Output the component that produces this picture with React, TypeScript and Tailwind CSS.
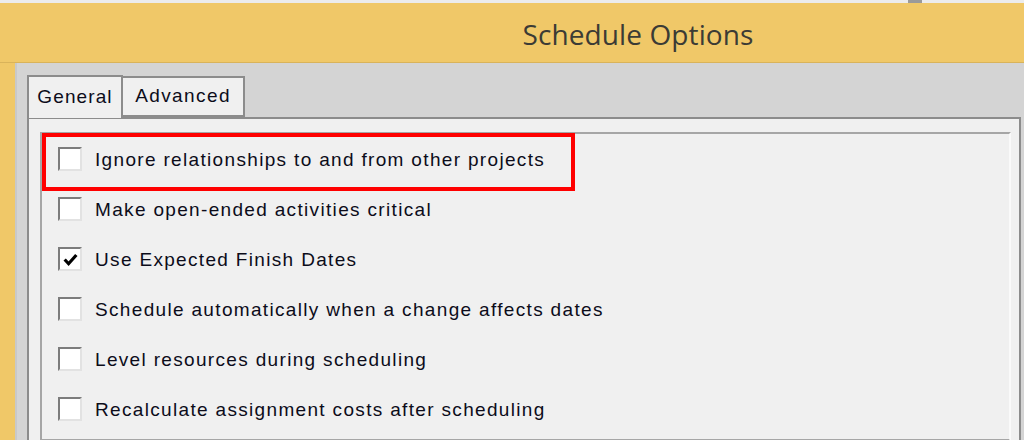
const options = [
  { label: 'Ignore relationships to and from other projects', checked: false },
  { label: 'Make open-ended activities critical', checked: false },
  { label: 'Use Expected Finish Dates', checked: true },
  { label: 'Schedule automatically when a change affects dates', checked: false },
  { label: 'Level resources during scheduling', checked: false },
  { label: 'Recalculate assignment costs after scheduling', checked: false },
];

function CheckBox({ checked }: { checked: boolean }) {
  return (
    <div className="w-[24px] h-[24px] shrink-0 bg-white border-[2px] border-t-[#7c7c7c] border-l-[#7c7c7c] border-r-[#e2e2e2] border-b-[#e2e2e2] flex items-center justify-center">
      {checked && (
        <svg viewBox="0 0 16 16" className="w-[17px] h-[17px]">
          <path d="M2.5 8 L6.2 12 L13.5 3.8" fill="none" stroke="#000" strokeWidth="3" />
        </svg>
      )}
    </div>
  );
}

export default function App() {
  return (
    <div className="w-[1024px] h-[440px] overflow-hidden bg-[#f0c868] flex flex-col font-['Liberation_Sans',Arial,sans-serif]">
      <div className="h-[3px] bg-[#ececec] relative shrink-0">
        <div className="absolute left-[908px] top-0 w-[14px] h-[3px] bg-[#9a9a9a]" />
      </div>
      <div className="h-[60px] shrink-0 flex items-center justify-center pl-[252px] pt-[3px] border-b border-[#d9b35a]">
        <span className="text-[28px] text-[#3b3b35] font-['Open_Sans','Noto_Sans',sans-serif] tracking-[0.1px]">Schedule Options</span>
      </div>
      <div className="flex-1 flex">
        <div className="w-[15px] shrink-0" />
        <div className="flex-1 bg-[#d4d4d4] border-l-[2px] border-[#c9c9c9] pl-[10px] pt-[12px] flex flex-col">
          <div className="flex items-end h-[42px] shrink-0 relative z-10">
            <div className="w-[96px] h-[43px] bg-[#f0f0f0] border-[2px] border-b-0 border-[#8c8c8c] flex items-center justify-center text-[19px] tracking-[1.1px] text-[#0c0c1a] -mb-[1px]">
              General
            </div>
            <div className="w-[122px] h-[41px] bg-[#f0f0f0] border-[2px] border-l-0 border-[#8c8c8c] flex items-center justify-center text-[19px] tracking-[1.4px] text-[#0c0c1a]">
              Advanced
            </div>
          </div>
          <div className="flex-1 bg-[#f0f0f0] border-[2px] border-[#8c8c8c] mr-[3px] pl-[11px] pt-[13px] pr-[8px]">
            <div className="relative h-[310px] border-t-[2px] border-l-[2px] border-[#a6a6a6] border-r-[2px] border-r-[#fafafa] border-b-[3px] border-b-[#a6a6a6] flex flex-col">
              <div className="absolute left-[0px] top-[-1px] w-[533px] h-[58px] border-[4px] border-[#ff0000]" />
              {options.map((o) => (
                <div key={o.label} className="h-[50px] shrink-0 flex items-center pl-[16px]">
                  <CheckBox checked={o.checked} />
                  <span className="ml-[13px] text-[19px] tracking-[1.33px] text-[#0c0c1a] leading-none">{o.label}</span>
                </div>
              ))}
            </div>
          </div>
        </div>
      </div>
    </div>
  );
}
